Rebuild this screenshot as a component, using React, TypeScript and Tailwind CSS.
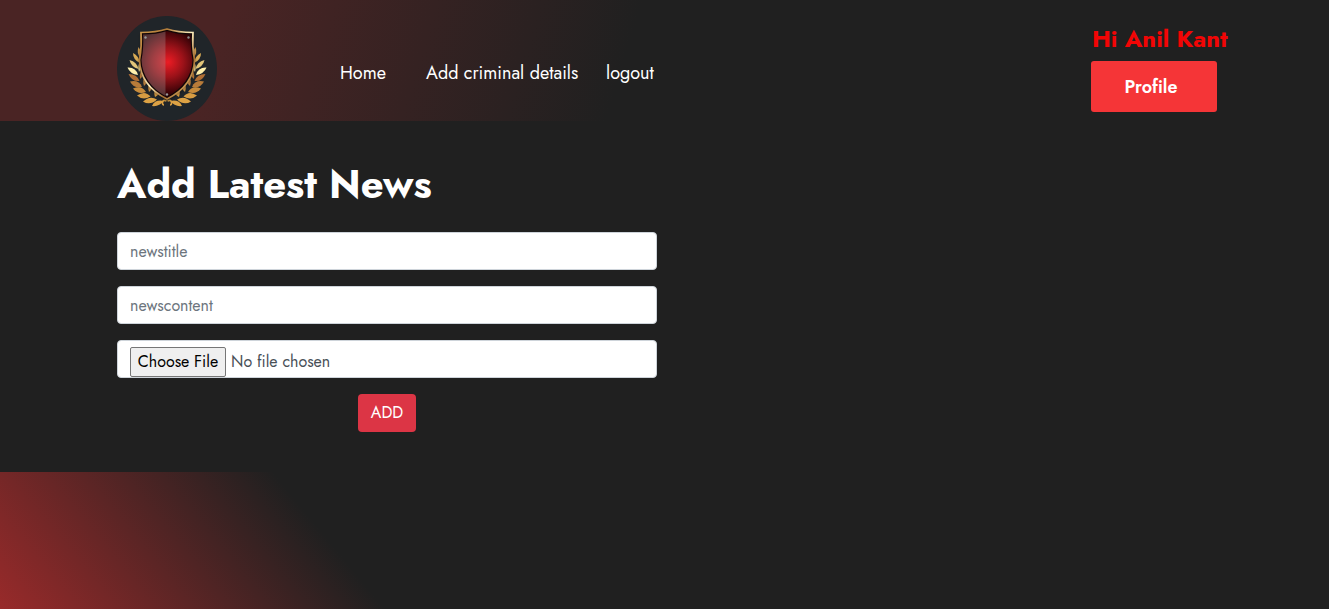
import React from "react";

const OUTER_LEAVES = [
  { d: "M24 42Q19 38 21.5 31Q25 36 24 42Z", c: "#c8964a" },
  { d: "M23 47Q16 44 16 37Q22 40 23 47Z", c: "#d9ab55" },
  { d: "M21.500 53Q14 51 12.500 44Q20 46 21.500 53Z", c: "#e2c579" },
  { d: "M21 59Q13 58 10.500 51.500Q19 51 21 59Z", c: "#fff0ac" },
  { d: "M22.500 65Q15 66 11.500 58Q20 58 22.500 65Z", c: "#b06e34" },
  { d: "M25 71Q17 73 13 65.500Q22 63.500 25 71Z", c: "#b87b39" },
  { d: "M29 76Q21 79 16 72.500Q25 69 29 76Z", c: "#c78b3c" },
  { d: "M33.500 80.500Q26 85 20 79.500Q28 74 33.500 80.500Z", c: "#d79c42" },
  { d: "M40 83.500Q33 90 26 85.500Q33 79 40 83.500Z", c: "#dda244" },
  { d: "M47 85Q42 91 35 90Q38 83 47 85Z", c: "#dda244" },
];

const INNER_LEAVES = [
  { d: "M22 56Q20 49 24 44Q26 51 22 56Z", c: "#efd98c" },
  { d: "M23 63Q22 56 26 53Q28 59 23 63Z", c: "#b67838" },
  { d: "M27 70Q25 63 28 61Q32 66 27 70Z", c: "#bd8340" },
  { d: "M32 76Q30 69 33 67Q37 73 32 76Z", c: "#c89144" },
  { d: "M38 81Q36 74 39 73Q44 78 38 81Z", c: "#d79c42" },
];

function Laurel() {
  return (
    <g>
      {[...OUTER_LEAVES, ...INNER_LEAVES].map((leaf) => (
        <path key={leaf.d} d={leaf.d} fill={leaf.c} />
      ))}
      <path d="M49.500 85q-4-2-4 2q0 2 1.500 2" fill="none" stroke="#dda244" strokeWidth="1.600" />
    </g>
  );
}

function Logo() {
  return (
    <svg className="block h-[105px] w-[100px]" viewBox="0 0 100 105" aria-label="Shield">
      <defs>
        <radialGradient id="red" gradientUnits="userSpaceOnUse" cx="51" cy="46" r="34">
          <stop offset="0" stopColor="#ed1c24" />
          <stop offset=".45" stopColor="#9c1219" />
          <stop offset="1" stopColor="#280004" />
        </radialGradient>
        <linearGradient id="gold" x1="0" y1="0" x2="1" y2="1">
          <stop offset="0" stopColor="#d09a4c" />
          <stop offset=".25" stopColor="#b07a38" />
          <stop offset=".5" stopColor="#fff0c0" />
          <stop offset=".7" stopColor="#a66d30" />
          <stop offset="1" stopColor="#f0ce80" />
        </linearGradient>
        <filter id="shade" x="-20%" y="-20%" width="140%" height="140%">
          <feGaussianBlur stdDeviation="1.500" />
        </filter>
      </defs>
      <ellipse cx="50" cy="52.5" rx="50" ry="52.5" fill="#202529" />
      <Laurel />
      <g transform="translate(100 0) scale(-1 1)">
        <Laurel />
      </g>
      <path d="M24 18Q40 18 50 15Q60 18 76 18Q75 32 78 46Q76 71 50 85Q24 71 22 46Q25 32 24 18Z" fill="#000" fillOpacity=".5" filter="url(#shade)" />
      <path d="M24 16.500Q39 16.500 50 13Q61 16.500 76 16.500Q75 30 77.500 44C77 62 66 75 50 83C34 75 23 62 22.500 44Q25 30 24 16.500Z" fill="#120506" stroke="url(#gold)" strokeWidth="1.700" />
      <path d="M26 18.500Q40 18.500 50 15Q60 18.500 74 18.500Q73 31 75.500 44C75 60 65 73 50 81C35 73 25 60 24.500 44Q27 31 26 18.500Z" fill="url(#red)" />
      <path d="M26 18.500Q40 18.500 48.500 15.500V80C35 73 25 60 24.500 44Q27 31 26 18.500Z" fill="#a7a09e" fillOpacity=".32" />
      <circle cx="28.500" cy="21.500" r="1.200" fill="#999" />
      <circle cx="71.500" cy="21.500" r="1.200" fill="#888" />
      <circle cx="50" cy="78.500" r="1.200" fill="#999" />
    </svg>
  );
}

const field =
  "h-[38px] w-full rounded border border-[#ced4da] bg-white px-3 text-[16px] text-[#495057]";

export default function App() {
  return (
    <div className="flex h-[609px] flex-col overflow-hidden bg-[#202020] font-['Jost','Lato',sans-serif] text-white">
      <header className="flex h-[121px] shrink-0 bg-[linear-gradient(107deg,#4a2424_0px,#4a2424_220px,#202020_615px)] pl-[117px] pt-4">
        <Logo />
        <nav className="ml-[123px] flex h-[28px] self-start pt-[43px] text-[18px] leading-[28px]">
          <a className="block w-[86px] whitespace-nowrap">Home</a>
          <a className="block w-[180px] whitespace-nowrap">Add criminal details</a>
          <a className="block whitespace-nowrap">logout</a>
        </nav>
        <div className="ml-auto mr-[102px] flex w-[136px] flex-col">
          <div className="mt-[7px] h-[38px] whitespace-nowrap pl-px text-[24px] font-bold leading-[32px] text-[#f20505]">Hi Anil Kant</div>
          <button className="h-[51px] w-[126px] rounded-[3px] bg-[#f53537] pr-1.5 pt-px text-[18px] font-semibold">Profile</button>
        </div>
      </header>
      <main className="h-[351px] shrink-0 px-[117px] pt-[38px]">
        <h1 className="h-[50px] whitespace-nowrap text-[40px] font-bold leading-[50px]">Add Latest News</h1>
        <form className="mt-[23px] flex w-[540px] flex-col gap-4">
          <input className={`${field} placeholder:text-[#6c757d]`} placeholder="newstitle" />
          <input className={`${field} placeholder:text-[#6c757d]`} placeholder="newscontent" />
          <div className={`${field} flex items-start pt-[6px]`}>
            <button type="button" className="h-[30px] w-[96px] whitespace-nowrap rounded-[2px] border border-[#767676] bg-[#efefef] text-[16px] text-black">Choose File</button>
            <span className="ml-[5px] leading-[30px]">No file chosen</span>
          </div>
          <button type="button" className="h-[38px] w-[58px] self-center rounded bg-[#dc3545] text-[16px]">ADD</button>
        </form>
      </main>
      <footer className="grow bg-[linear-gradient(50.7deg,#982a2a_0px,#202020_298px)]" />
    </div>
  );
}
